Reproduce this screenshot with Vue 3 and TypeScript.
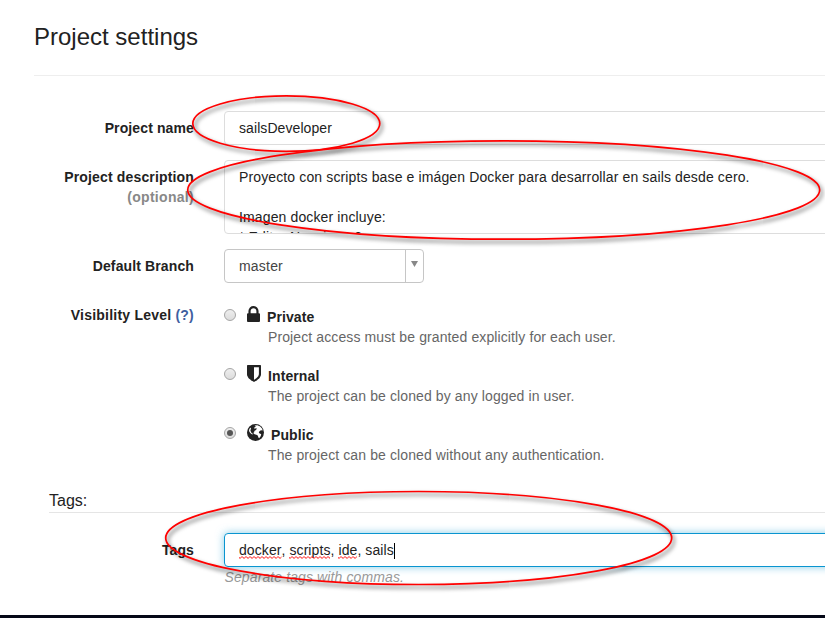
<script setup lang="ts">
import { ref } from 'vue'

interface Level {
  id: string
  name: string
  help: string
}

interface TagPart {
  text: string
  typo: boolean
}

const levels: Level[] = [
  { id: 'private', name: 'Private', help: 'Project access must be granted explicitly for each user.' },
  { id: 'internal', name: 'Internal', help: 'The project can be cloned by any logged in user.' },
  { id: 'public', name: 'Public', help: 'The project can be cloned without any authentication.' },
]
const tagParts: TagPart[] = [
  { text: 'docker', typo: true },
  { text: ', ', typo: false },
  { text: 'scripts', typo: true },
  { text: ', ', typo: false },
  { text: 'ide', typo: true },
  { text: ', sails', typo: false },
]
const selected = ref('public')
</script>

<template>
  <main class="page">
    <h1 class="title">Project settings</h1>
    <form class="form" @submit.prevent>
      <div class="row name-row">
        <div class="label">Project name</div>
        <div class="control">sailsDeveloper</div>
      </div>
      <div class="row desc-row">
        <div class="label desc-label">Project description<br /><span class="optional">(optional)</span></div>
        <div class="control area">Proyecto con scripts base e imágen Docker para desarrollar en sails desde cero.<br /><br />Imagen docker incluye:<br />* Editor Neovim 0.2</div>
      </div>
      <div class="row branch-row">
        <div class="label">Default Branch</div>
        <div class="control select">
          <span class="value">master</span>
          <span class="arrow"><svg width="7" height="6" viewBox="0 0 7 6"><path d="M0 0h7L3.5 6z" fill="#888" /></svg></span>
        </div>
      </div>
      <div class="row vis-row">
        <div class="label vis-label">Visibility Level <span class="hint">(?)</span></div>
        <div class="levels">
          <div v-for="l in levels" :key="l.id" class="level" @click="selected = l.id">
            <span class="radio" :class="{ on: selected === l.id }"></span>
            <div class="level-body">
              <div class="level-head">
                <svg v-if="l.id === 'private'" class="icon lock" viewBox="320 128 1152 1408"><path d="M640 768h512v-192q0-106-75-181t-181-75-181 75-75 181v192zm832 96v576q0 40-28 68t-68 28h-960q-40 0-68-28t-28-68v-576q0-40 28-68t68-28h32v-192q0-184 132-316t316-132 316 132 132 316v192h32q40 0 68 28t28 68z" /></svg>
                <svg v-else-if="l.id === 'internal'" class="icon shield" viewBox="256 128 1280 1536"><path d="M1344 960v-640h-448v1137q119-63 213-137 235-184 235-360zm192-768v768q0 86-33.5 170.5t-83 150-118 127.5-126.5 103-121 77.5-89.5 49.5-42.5 20q-12 6-26 6t-26-6q-16-7-42.5-20t-89.5-49.5-121-77.5-126.5-103-118-127.5-83-150-33.5-170.5v-768q0-26 19-45t45-19h1152q26 0 45 19t19 45z" /></svg>
                <svg v-else class="icon globe" viewBox="0 0 17 17">
                  <circle cx="8.5" cy="8.5" r="8.5" />
                  <path fill="#fff" d="M7.6 1.4 10.4 1.2 13.2 2.4 15.2 4.8 15.6 6.6 14 6.2 12.4 7.2 11.8 8.8 13 9.8 14.2 10 13.8 12 12.2 14.2 11.2 13.2 11 11.8 9.4 10.8 7.6 10.2 6.2 9 7.4 8 7.2 7 8.6 6.2 10 4.8 9 4.2 7.6 4.8 7 3.8 8.8 2.8z" />
                  <path fill="#fff" d="M2.3 5 3.5 3.4 4 4.6 3.4 6.6 4.2 8.6 6 10 5.2 10.4 3.2 9 2 7z" />
                </svg>
                <strong>{{ l.name }}</strong>
              </div>
              <div class="help">{{ l.help }}</div>
            </div>
          </div>
        </div>
      </div>
      <h2 class="legend">Tags:</h2>
      <div class="row tags-row">
        <div class="label">Tags</div>
        <div>
          <div class="control focused"><span v-for="(p, i) in tagParts" :key="i" :class="{ typo: p.typo }">{{ p.text }}<svg v-if="p.typo" class="squiggle"><rect width="100%" height="3" fill="url(#zigzag)" /></svg></span><span class="caret"></span></div>
          <div class="note">Separate tags with commas.</div>
        </div>
      </div>
    </form>
    <div class="bottom"></div>
    <svg class="marks" viewBox="0 0 825 618">
      <defs>
        <pattern id="zigzag" width="4" height="3" patternUnits="userSpaceOnUse">
          <path d="M-1 -.2 1 2.2 3 .2 5 2.2" fill="none" stroke="#f00" stroke-width="0.9" transform="translate(0 .3)" />
        </pattern>
      </defs>
      <ellipse cx="286.3" cy="123.6" rx="93.5" ry="27.8" />
      <ellipse cx="503.7" cy="190" rx="316" ry="49.2" />
      <ellipse cx="418.7" cy="538" rx="253" ry="46.5" />
    </svg>
  </main>
</template>

<style>
body {
  background: #fff;
  overflow: hidden;
}
</style>

<style scoped>
.page {
  position: relative;
  box-sizing: border-box;
  width: 825px;
  height: 618px;
  overflow: hidden;
  padding-left: 34px;
  font: 14px/20px "Liberation Sans", Arial, sans-serif;
  color: #222;
  display: flex;
  flex-direction: column;
}
.title {
  margin: 0;
  height: 75px;
  line-height: 73px;
  font-size: 24px;
  font-weight: 400;
  border-bottom: 1px solid #eee;
}
.form {
  padding-top: 35px;
  flex: 1;
}
.row {
  display: grid;
  grid-template-columns: 160px 616px;
  column-gap: 30px;
}
.label {
  text-align: right;
  font-weight: 700;
  padding-top: 7px;
  white-space: nowrap;
  letter-spacing: 0.12px;
}
.desc-label { letter-spacing: 0.16px; }
.vis-label { letter-spacing: 0.22px; }
.optional { color: #888; letter-spacing: 0.3px; }
.hint { color: #3f5f9f; }
.control {
  box-sizing: border-box;
  height: 34px;
  border: 1px solid #ddd;
  border-radius: 4px;
  padding: 6px 14px;
  white-space: nowrap;
  overflow: hidden;
  letter-spacing: 0.08px;
}
.desc-row { margin-top: 15px; }
.area { height: 74px; letter-spacing: 0.13px; }
.branch-row { margin-top: 15px; }
.select {
  width: 200px;
  padding: 0 0 0 14px;
  border-color: #c6c6c6;
  display: flex;
  color: #444;
  letter-spacing: 0.2px;
}
.value { flex: 1; line-height: 32px; }
.arrow {
  width: 17px;
  border-left: 1px solid #c6c6c6;
  display: flex;
  justify-content: center;
  padding-top: 11px;
}
.arrow svg { flex: none; }
.vis-row { margin-top: 15px; }
.levels { padding-top: 6px; }
.level {
  display: flex;
  height: 59px;
}
.radio {
  box-sizing: border-box;
  width: 12px;
  height: 12px;
  margin-top: 5px;
  border: 1px solid #a5a5a5;
  border-radius: 50%;
  background: linear-gradient(#eee, #dcdcdc);
  display: flex;
  align-items: center;
  justify-content: center;
}
.radio.on::after {
  content: "";
  width: 6px;
  height: 6px;
  border-radius: 50%;
  background: #555;
}
.level-body { padding-left: 11px; }
.level-head {
  display: flex;
  align-items: flex-start;
  height: 22px;
}
.level-head strong { padding-top: 3px; letter-spacing: 0.1px; }
.icon { fill: #222; flex: none; }
.lock { width: 13px; height: 16px; margin: 2px 7px 0 0; }
.shield { width: 14px; height: 17px; margin: 2px 7px 0 0; }
.globe { width: 17px; height: 17px; margin: 2px 7px 0 0; }
.help {
  padding-left: 21px;
  color: #666;
  line-height: 22px;
  white-space: nowrap;
  letter-spacing: 0.11px;
}
.legend {
  margin: 0 0 20px 15px;
  height: 31px;
  font-size: 16px;
  line-height: 40px;
  font-weight: 400;
  border-bottom: 1px solid #e5e5e5;
}
.focused {
  border-color: #0a95d0;
  box-shadow: 0 0 8px rgba(58, 171, 214, 0.6);
  overflow: visible;
  white-space: pre;
}
.typo { position: relative; }
.squiggle {
  position: absolute;
  left: 0;
  bottom: -1px;
  width: 100%;
  height: 3px;
}
.caret {
  display: inline-block;
  width: 1px;
  height: 16px;
  background: #000;
  vertical-align: -4px;
}
.note { color: #999; font-style: italic; letter-spacing: 0.11px; padding-left: 0.5px; }
.bottom {
  flex: none;
  height: 3px;
  margin-left: -34px;
  background: #050817;
}
.marks {
  position: absolute;
  left: 0;
  top: 0;
  width: 825px;
  height: 618px;
  pointer-events: none;
}
.marks ellipse {
  fill: none;
  stroke: #f00;
  stroke-width: 1.7;
  filter: drop-shadow(2.5px 3.5px 2px rgba(0, 0, 0, 0.65));
}
</style>
